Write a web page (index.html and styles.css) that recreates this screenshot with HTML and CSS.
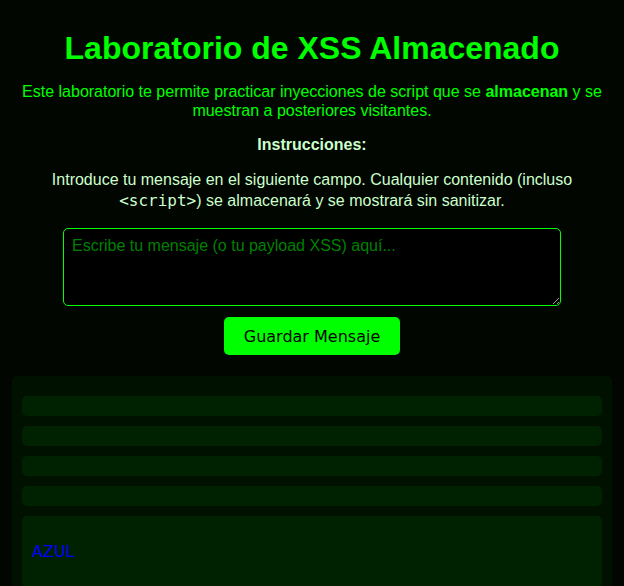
FILE: index.html
```html
<!DOCTYPE html>
<html lang="es">
<head>
<meta charset="utf-8">
<title>Laboratorio de XSS Almacenado</title>
<link rel="stylesheet" href="styles.css">
</head>
<body>
<div class="page">
  <h1 class="title">Laboratorio de XSS Almacenado</h1>
  <p class="intro">Este laboratorio te permite practicar inyecciones de script que se <strong>almacenan</strong> y se muestran a posteriores visitantes.</p>
  <p class="instr-title"><strong>Instrucciones:</strong></p>
  <p class="instr">Introduce tu mensaje en el siguiente campo. Cualquier contenido (incluso <code>&lt;script&gt;</code>) se almacenará y se mostrará sin sanitizar.</p>
  <form class="form">
    <textarea class="input" placeholder="Escribe tu mensaje (o tu payload XSS) aquí..."></textarea>
    <button type="button" class="btn">Guardar Mensaje</button>
  </form>
  <div class="messages">
    <div class="msg"></div>
    <div class="msg"></div>
    <div class="msg"></div>
    <div class="msg"></div>
    <div class="msg"><p class="blue">AZUL</p></div>
  </div>
</div>
</body>
</html>
```

FILE: styles.css
```css
html, body {
  margin: 0;
  background: #010601;
}
body {
  font-family: "Liberation Sans", Arial, sans-serif;
  font-size: 16px;
}
.page {
  max-width: 600px;
  margin: 0 auto;
  padding-top: 9px;
  text-align: center;
}
.title {
  font-size: 32px;
  font-weight: bold;
  color: #00ff00;
  margin: 21px 0 15px;
}
.intro {
  color: #00ff00;
  margin: 15px 0 16px;
  line-height: 19px;
}
.instr-title, .instr {
  color: #ccffcc;
  margin: 16px 0;
}
.instr {
  line-height: 1.3;
}
.instr code {
  font-family: "DejaVu Sans Mono", monospace;
  font-size: 16px;
}
.form {
  display: flex;
  flex-direction: column;
  align-items: center;
  gap: 11px;
  margin-top: 16px;
}
.input {
  box-sizing: border-box;
  width: 498px;
  height: 78px;
  padding: 8px;
  background: #000;
  color: #00ff00;
  border: 1px solid #00ff00;
  border-radius: 5px;
  font-family: "Liberation Sans", Arial, sans-serif;
  font-size: 16px;
  outline: none;
  display: block;
  margin: 0;
}
.input::placeholder {
  color: #008000;
  opacity: 1;
}
.btn {
  background: #00ff00;
  color: #000;
  border: none;
  border-radius: 5px;
  padding: 10px 20px;
  font-family: "DejaVu Sans", sans-serif;
  font-size: 16px;
  height: 38px;
  cursor: pointer;
}
.messages {
  margin-top: 21px;
  background: #001100;
  border-radius: 5px;
  padding: 10px;
  text-align: left;
}
.msg {
  background: #002200;
  border-radius: 5px;
  padding: 10px;
  margin: 10px 0;
}
.blue {
  color: #0000ff;
  font-family: "DejaVu Sans", sans-serif;
  font-weight: normal;
  margin: 16px 0;
}
```
